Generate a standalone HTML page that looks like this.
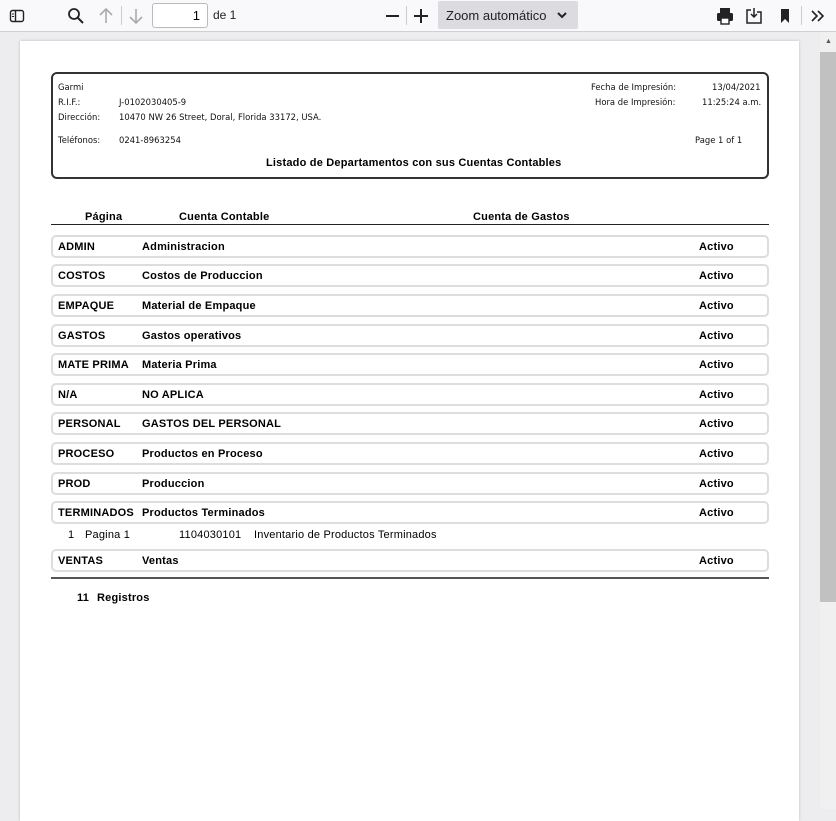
<!DOCTYPE html>
<html><head><meta charset="utf-8"><style>
*{margin:0;padding:0;box-sizing:border-box}
body{width:836px;height:809px;background:#ededf0;font-family:"Liberation Sans",sans-serif;position:relative;overflow:hidden}
.tb{position:absolute;left:0;top:0;width:836px;height:32px;background:#f9f9fb;border-bottom:1px solid #d0d0d4}
.a{position:absolute}
.page{position:absolute;left:20px;top:41px;width:779px;height:780px;background:#fff;box-shadow:0 0 3px rgba(0,0,0,.2)}
.sb{position:absolute;left:820px;top:32px;width:16px;height:777px;background:#f0f0f0}
.hdr{position:absolute;left:51px;top:72px;width:718px;height:107px;border:2px solid #333;border-radius:6px}
.s{font-family:"DejaVu Sans",sans-serif;font-size:9px;color:#111;position:absolute;transform:scaleX(.935);transform-origin:left}
.row{position:absolute;left:51px;width:718px;height:23px;border:2px solid #ddd;border-radius:5px}
.t{position:absolute;font-size:11px;font-weight:bold;color:#000;letter-spacing:.2px}
.n{position:absolute;font-size:11px;color:#000;letter-spacing:.2px}
</style></head><body>
<div class="tb">
<svg class="a" style="left:9px;top:8px" width="16" height="16"><rect x="1.5" y="2.5" width="13" height="11" rx="2" fill="none" stroke="#222" stroke-width="1.4"/><line x1="6.5" y1="3" x2="6.5" y2="13" stroke="#222" stroke-width="1.4"/><line x1="3" y1="6" x2="5" y2="6" stroke="#222"/><line x1="3" y1="8.5" x2="5" y2="8.5" stroke="#222"/></svg>
<svg class="a" style="left:67px;top:7px" width="18" height="18"><circle cx="7" cy="7" r="5" fill="none" stroke="#222" stroke-width="1.8"/><line x1="10.5" y1="10.5" x2="16" y2="16" stroke="#222" stroke-width="2"/></svg>
<svg class="a" style="left:98px;top:7px" width="16" height="18"><path d="M8 2V16M2 8L8 2L14 8" fill="none" stroke="#aaa" stroke-width="1.6"/></svg>
<div class="a" style="left:121px;top:6px;width:1px;height:19px;background:#ccc"></div>
<svg class="a" style="left:128px;top:7px" width="16" height="18"><path d="M8 2V16M2 10L8 16L14 10" fill="none" stroke="#aaa" stroke-width="1.6"/></svg>
<div class="a" style="left:152px;top:3px;width:56px;height:25px;border:1px solid #bbb;border-radius:3px;background:#fff;font-size:13px;text-align:right;padding:4px 7px 0 0">1</div>
<div class="a" style="left:213px;top:8px;font-size:12px;color:#222">de 1</div>
<div class="a" style="left:386px;top:15px;width:13px;height:2px;background:#222"></div>
<div class="a" style="left:406px;top:6px;width:1px;height:19px;background:#ccc"></div>
<div class="a" style="left:414px;top:15px;width:14px;height:2px;background:#222"></div>
<div class="a" style="left:420px;top:9px;width:2px;height:14px;background:#222"></div>
<div class="a" style="left:438px;top:1px;width:140px;height:28px;background:#dcdce0;border-radius:2px;font-size:13px;color:#222;padding:7px 0 0 8px">Zoom automático</div>
<svg class="a" style="left:557px;top:11px" width="10" height="8"><path d="M1 2L5 6L9 2" fill="none" stroke="#222" stroke-width="2"/></svg>
<svg class="a" style="left:716px;top:7px" width="18" height="18"><rect x="4" y="1" width="10" height="5" fill="#222"/><rect x="1" y="6" width="16" height="8" rx="1.5" fill="#222"/><rect x="5" y="11" width="8" height="6" fill="#fff" stroke="#222" stroke-width="1.4"/></svg>
<svg class="a" style="left:745px;top:7px" width="18" height="18"><path d="M6 3H2V16H16V5H12" fill="none" stroke="#222" stroke-width="1.5"/><path d="M9 1V10M6 7L9 10L12 7" fill="none" stroke="#222" stroke-width="1.5"/></svg>
<svg class="a" style="left:779px;top:7px" width="12" height="18"><path d="M2 2H10V16L6 12L2 16Z" fill="#222"/></svg>
<div class="a" style="left:801px;top:6px;width:1px;height:19px;background:#ccc"></div>
<svg class="a" style="left:810px;top:9px" width="16" height="14"><path d="M2 2L7 7L2 12M8 2L13 7L8 12" fill="none" stroke="#222" stroke-width="1.6"/></svg>
</div>
<div class="page"></div>
<div class="sb"><div class="a" style="left:0;top:20px;width:16px;height:550px;background:#c1c1c1"></div><div class="a" style="left:5px;top:6px;font-size:7px;color:#555">▲</div></div>
<div class="hdr"></div>
<div class="s" style="left:58px;top:83px">Garmi</div>
<div class="s" style="left:58px;top:98px">R.I.F.:</div><div class="s" style="left:119px;top:98px">J-0102030405-9</div>
<div class="s" style="left:58px;top:113px">Dirección:</div><div class="s" style="left:119px;top:113px">10470 NW 26 Street, Doral, Florida 33172, USA.</div>
<div class="s" style="left:58px;top:136px">Teléfonos:</div><div class="s" style="left:119px;top:136px">0241-8963254</div>
<div class="s" style="left:591px;top:83px">Fecha de Impresión:</div><div class="s" style="left:712px;top:83px">13/04/2021</div>
<div class="s" style="left:595px;top:98px">Hora de Impresión:</div><div class="s" style="left:702px;top:98px">11:25:24 a.m.</div>
<div class="s" style="left:695px;top:136px">Page 1 of 1</div>
<div class="t" style="left:266px;top:157px">Listado de Departamentos con sus Cuentas Contables</div>
<div class="t" style="left:85px;top:211px">Página</div>
<div class="t" style="left:179px;top:211px">Cuenta Contable</div>
<div class="t" style="left:473px;top:211px">Cuenta de Gastos</div>
<div class="a" style="left:51px;top:224px;width:718px;height:1px;background:#222"></div>

<div class="row" style="top:235px"></div><div class="t" style="left:58px;top:241px">ADMIN</div><div class="t" style="left:142px;top:241px">Administracion</div><div class="t" style="left:699px;top:241px">Activo</div>
<div class="row" style="top:264px"></div><div class="t" style="left:58px;top:270px">COSTOS</div><div class="t" style="left:142px;top:270px">Costos de Produccion</div><div class="t" style="left:699px;top:270px">Activo</div>
<div class="row" style="top:294px"></div><div class="t" style="left:58px;top:300px">EMPAQUE</div><div class="t" style="left:142px;top:300px">Material de Empaque</div><div class="t" style="left:699px;top:300px">Activo</div>
<div class="row" style="top:324px"></div><div class="t" style="left:58px;top:330px">GASTOS</div><div class="t" style="left:142px;top:330px">Gastos operativos</div><div class="t" style="left:699px;top:330px">Activo</div>
<div class="row" style="top:353px"></div><div class="t" style="left:58px;top:359px">MATE PRIMA</div><div class="t" style="left:142px;top:359px">Materia Prima</div><div class="t" style="left:699px;top:359px">Activo</div>
<div class="row" style="top:383px"></div><div class="t" style="left:58px;top:389px">N/A</div><div class="t" style="left:142px;top:389px">NO APLICA</div><div class="t" style="left:699px;top:389px">Activo</div>
<div class="row" style="top:412px"></div><div class="t" style="left:58px;top:418px">PERSONAL</div><div class="t" style="left:142px;top:418px">GASTOS DEL PERSONAL</div><div class="t" style="left:699px;top:418px">Activo</div>
<div class="row" style="top:442px"></div><div class="t" style="left:58px;top:448px">PROCESO</div><div class="t" style="left:142px;top:448px">Productos en Proceso</div><div class="t" style="left:699px;top:448px">Activo</div>
<div class="row" style="top:472px"></div><div class="t" style="left:58px;top:478px">PROD</div><div class="t" style="left:142px;top:478px">Produccion</div><div class="t" style="left:699px;top:478px">Activo</div>
<div class="row" style="top:501px"></div><div class="t" style="left:58px;top:507px">TERMINADOS</div><div class="t" style="left:142px;top:507px">Productos Terminados</div><div class="t" style="left:699px;top:507px">Activo</div>
<div class="n" style="left:68px;top:529px">1</div><div class="n" style="left:85px;top:529px">Pagina 1</div><div class="n" style="left:179px;top:529px">1104030101</div><div class="n" style="left:254px;top:529px">Inventario de Productos Terminados</div>
<div class="row" style="top:549px"></div><div class="t" style="left:58px;top:555px">VENTAS</div><div class="t" style="left:142px;top:555px">Ventas</div><div class="t" style="left:699px;top:555px">Activo</div>
<div class="a" style="left:51px;top:577px;width:718px;height:2px;background:#555"></div>
<div class="t" style="left:77px;top:592px">11</div><div class="t" style="left:97px;top:592px">Registros</div>
</body></html>
